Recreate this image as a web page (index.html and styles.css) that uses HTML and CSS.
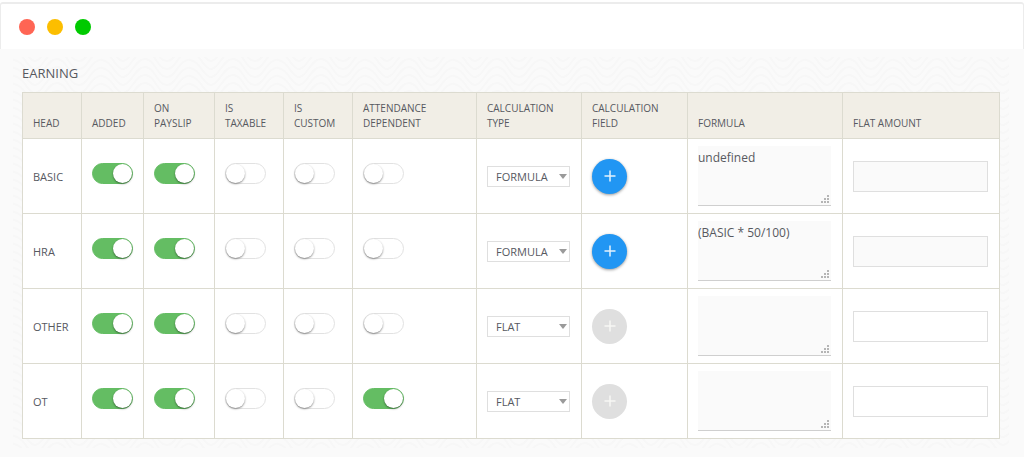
FILE: index.html
```html
<!DOCTYPE html>
<html lang="en">
<head>
<meta charset="utf-8">
<title>Earning heads</title>
<link rel="stylesheet" href="styles.css">
<script src="rows.js" defer></script>
</head>
<body>
<header class="titlebar">
  <span class="dot dot-red"></span>
  <span class="dot dot-yellow"></span>
  <span class="dot dot-green"></span>
</header>
<main class="page">
  <section class="panel">
    <h1 class="title">EARNING</h1>
    <table class="heads">
      <colgroup>
        <col class="c-head"><col class="c-added"><col class="c-payslip"><col class="c-taxable"><col class="c-custom"><col class="c-attendance"><col class="c-type"><col class="c-field"><col class="c-formula"><col>
      </colgroup>
      <thead>
        <tr>
          <th scope="col">HEAD</th>
          <th scope="col">ADDED</th>
          <th scope="col">ON<br>PAYSLIP</th>
          <th scope="col">IS<br>TAXABLE</th>
          <th scope="col">IS<br>CUSTOM</th>
          <th scope="col">ATTENDANCE<br>DEPENDENT</th>
          <th scope="col">CALCULATION<br>TYPE</th>
          <th scope="col">CALCULATION<br>FIELD</th>
          <th scope="col">FORMULA</th>
          <th scope="col">FLAT AMOUNT</th>
        </tr>
      </thead>
      <tbody id="rows"></tbody>
    </table>
  </section>
</main>
</body>
</html>
```
FILE: rows.js
```js
const heads = [
  { name: "BASIC", on: [1, 1, 0, 0, 0], type: "FORMULA", formula: "undefined" },
  { name: "HRA", on: [1, 1, 0, 0, 0], type: "FORMULA", formula: "(BASIC * 50/100)" },
  { name: "OTHER", on: [1, 1, 0, 0, 0], type: "FLAT", formula: "" },
  { name: "OT", on: [1, 1, 0, 0, 1], type: "FLAT", formula: "" }
];
const flags = ["added", "on payslip", "is taxable", "is custom", "attendance dependent"];

document.getElementById("rows").innerHTML = heads.map(h => {
  const flat = h.type === "FLAT";
  const toggles = h.on.map((v, i) =>
    `<td><input class="toggle" type="checkbox" aria-label="${h.name} ${flags[i]}"${v ? " checked" : ""}></td>`).join("");
  const options = ["FORMULA", "FLAT"].map(t =>
    `<option${t === h.type ? " selected" : ""}>${t}</option>`).join("");
  return `<tr>
    <td>${h.name}</td>${toggles}
    <td><select class="type" aria-label="${h.name} calculation type">${options}</select></td>
    <td><button class="add" type="button" aria-label="Add field to ${h.name}"${flat ? " disabled" : ""}>
      <svg viewBox="0 0 12 12" width="12" height="12" aria-hidden="true"><path d="M6 .5v11M.5 6h11" fill="none" stroke="currentColor" stroke-width="1.5"/></svg>
    </button></td>
    <td><textarea class="formula" readonly aria-label="${h.name} formula">${h.formula}</textarea></td>
    <td><input class="amount" type="text" aria-label="${h.name} flat amount"${flat ? "" : " disabled"}></td>
  </tr>`;
}).join("");
```
FILE: styles.css
```css
* { box-sizing: border-box; }

body {
  margin: 0;
  background: #fff;
  color: #57595f;
  font-family: "Open Sans", "Noto Sans", sans-serif;
  font-size: 12px;
}

.titlebar {
  display: flex;
  align-items: center;
  gap: 12px;
  height: 47px;
  margin-top: 2px;
  padding: 0 18px;
  border: 1px solid #ececec;
  border-width: 2px 1px 0;
  border-radius: 3px 3px 0 0;
}

.dot {
  width: 16px;
  height: 16px;
  border-radius: 50%;
}
.dot-red { background: #ff6554; }
.dot-yellow { background: #fcbe00; }
.dot-green { background: #00ca00; }

.page {
  padding: 8px 15px 9px 13px;
  background: #fafafa;
}

.panel {
  padding: 6px 9px 9px;
  background: url("data:image/svg+xml,%3Csvg xmlns='http://www.w3.org/2000/svg' width='88' height='24'%3E%3Cg fill='none' stroke='%23f7f7f7' stroke-width='2'%3E%3Cpath d='M-4 2C12 2 14 20 22 20S34 2 44 2 56 20 66 20 76 2 92 2M-4 10C12 10 14 28 22 28S34 10 44 10 56 28 66 28 76 10 92 10M-4 -14C12 -14 14 4 22 4S34 -14 44 -14 56 4 66 4 76 -14 92 -14M-4 -6C12 -6 14 12 22 12S34 -6 44 -6 56 12 66 12 76 -6 92 -6M-4 18C12 18 14 36 22 36S34 18 44 18 56 36 66 36 76 18 92 18'/%3E%3C/g%3E%3C/svg%3E");
}

.title {
  margin: 0 0 9px;
  font-size: 13px;
  font-weight: 400;
  line-height: 20px;
}

.heads {
  width: 100%;
  table-layout: fixed;
  border-collapse: collapse;
  background: #fff;
  font-size: 11px;
}
.c-head { width: 59px; }
.c-added { width: 62px; }
.c-payslip { width: 71px; }
.c-taxable { width: 69px; }
.c-custom { width: 69px; }
.c-attendance { width: 124px; }
.c-type { width: 105px; }
.c-field { width: 106px; }
.c-formula { width: 155px; }

.heads th,
.heads td {
  border: 1px solid #dcdbd0;
  text-align: left;
}
.heads th {
  height: 46px;
  padding: 7px 11px 7px 10px;
  background: #f1eee6;
  font-size: 10px;
  font-weight: 400;
  line-height: 15px;
  vertical-align: bottom;
}
.heads td {
  height: 75px;
  padding: 0 11px 0 10px;
  vertical-align: middle;
}

.toggle {
  display: block;
  appearance: none;
  width: 41px;
  height: 21px;
  margin: 0 0 6px;
  border: 1px solid #e2e2e2;
  border-radius: 11px;
  background: #fff;
}
.toggle::before {
  content: "";
  display: block;
  width: 19px;
  height: 19px;
  border-radius: 50%;
  background: #fff;
  box-shadow: 0 1px 2px rgba(0, 0, 0, .45);
}
.toggle:checked {
  border-color: #64bd63;
  background: #64bd63;
}
.toggle:checked::before { margin-left: auto; }

.type {
  display: block;
  appearance: none;
  width: 100%;
  height: 21px;
  margin: 0;
  padding: 0 8px;
  border: 1px solid #dfdfdf;
  border-radius: 0;
  background: #fff url("data:image/svg+xml,%3Csvg xmlns='http://www.w3.org/2000/svg' width='8' height='5'%3E%3Cpath d='M0 0h8L4 5z' fill='%239a9a9a'/%3E%3C/svg%3E") no-repeat right 2px center;
  color: inherit;
  font: inherit;
}

.add {
  display: flex;
  align-items: center;
  justify-content: center;
  width: 35px;
  height: 35px;
  padding: 0;
  border: 0;
  border-radius: 50%;
  background: #2196f3;
  box-shadow: 0 1px 3px rgba(0, 0, 0, .4);
  color: #e3f2fd;
}
.add:disabled {
  background: #dfdfdf;
  box-shadow: none;
  color: #f8f8f5;
}

.formula {
  display: block;
  width: 100%;
  height: 60px;
  margin: 0;
  padding: 3px 0;
  border: 0;
  border-bottom: 1px solid #cfcfcf;
  background: #fafafa url("data:image/svg+xml,%3Csvg xmlns='http://www.w3.org/2000/svg' width='8' height='8'%3E%3Cpath d='M0 6h2v2H0zM3 6h2v2H3zM6 6h2v2H6zM3 3h2v2H3zM6 3h2v2H6zM6 0h2v2H6z' fill='%23b5b5b5'/%3E%3C/svg%3E") no-repeat right 2px bottom 2px;
  color: inherit;
  font-family: inherit;
  font-size: 12px;
  line-height: 18px;
  resize: none;
}

.amount {
  display: block;
  width: 100%;
  height: 31px;
  padding: 0 8px;
  border: 1px solid #dfdfdf;
  background: #fff;
  color: inherit;
  font: inherit;
}
.amount:disabled { background: #fafafa; }
```
